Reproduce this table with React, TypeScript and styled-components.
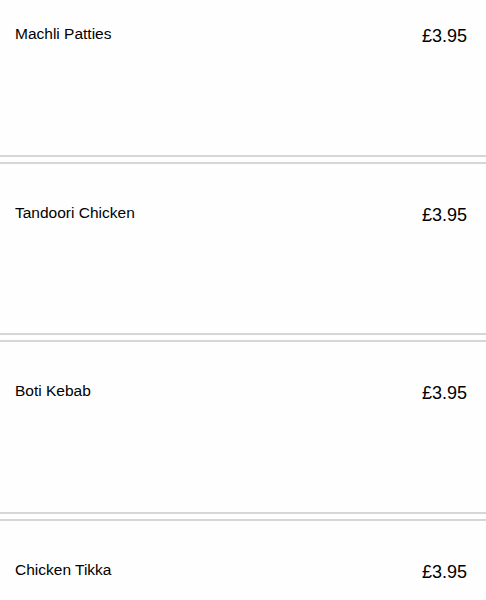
import React from 'react'
import styled, { createGlobalStyle } from 'styled-components'

const GlobalStyle = createGlobalStyle`
  html, body {
    margin: 0;
    padding: 0;
    background: #fefefe;
    font-family: "Liberation Sans", Arial, sans-serif;
    color: #000;
    overflow: hidden;
  }
`

const Menu = styled.div`
  display: flex;
  flex-direction: column;
  gap: 5px;
  margin-top: -17px;
`

const Item = styled.div`
  box-sizing: border-box;
  height: 173.5px;
  border-top: 2px solid #d6d6d6;
  border-bottom: 2px solid #d6d6d6;
  background: #fefefe;
  padding: 40px 19px 0 15px;
`

const Row = styled.div`
  display: flex;
  justify-content: space-between;
  align-items: flex-start;
`

const Name = styled.div`
  font-size: 15.5px;
`

const Price = styled.div`
  font-size: 18px;
  margin-top: 1px;
`

const items = [
  { name: 'Machli Patties', price: 3.95 },
  { name: 'Tandoori Chicken', price: 3.95 },
  { name: 'Boti Kebab', price: 3.95 },
  { name: 'Chicken Tikka', price: 3.95 },
]

const App = () => {
  return (
    <>
      <GlobalStyle />
      <Menu>
        {items.map((item) => (
          <Item key={item.name}>
            <Row>
              <Name>{item.name}</Name>
              <Price>£{item.price.toFixed(2)}</Price>
            </Row>
          </Item>
        ))}
      </Menu>
    </>
  )
}

export default App
